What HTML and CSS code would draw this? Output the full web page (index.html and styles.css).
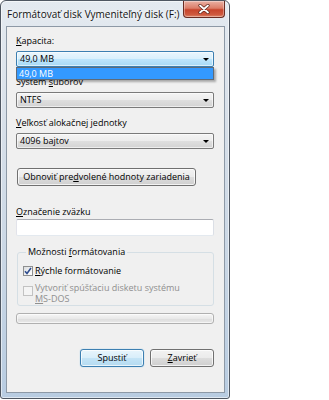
FILE: index.html
```html
<!DOCTYPE html>
<html lang="sk">
<head>
<meta charset="utf-8">
<title>Formátovať disk</title>
<link rel="stylesheet" href="styles.css">
</head>
<body>
<div class="window">
  <div class="titlebar">
    <span class="title">Formátovať disk Vymeniteľný disk (F:)</span>
    <div class="close">
      <svg width="12" height="10" viewBox="0 0 12 10">
        <path d="M2 1.5 L10 8.5 M10 1.5 L2 8.5" stroke="#5a2218" stroke-width="3.2" stroke-linecap="round" fill="none"/>
        <path d="M2 1.5 L10 8.5 M10 1.5 L2 8.5" stroke="#ffffff" stroke-width="1.8" stroke-linecap="round" fill="none"/>
      </svg>
    </div>
  </div>
  <div class="client">
    <div class="label"><u>K</u>apacita:</div>
    <div class="combo combo-open">
      <span class="combo-text">49,0 MB</span><span class="arrow"></span>
      <div class="dropdown"><div class="item">49,0 MB</div></div>
    </div>
    <div class="label label-next">Systém <u>s</u>úborov</div>
    <div class="combo">
      <span class="combo-text">NTFS</span><span class="arrow"></span>
    </div>
    <div class="label label-next"><u>V</u>eľkosť alokačnej jednotky</div>
    <div class="combo">
      <span class="combo-text">4096 bajtov</span><span class="arrow"></span>
    </div>
    <button class="btn btn-reset">Obnoviť pre<u>d</u>volené hodnoty zariadenia</button>
    <div class="label label-volume"><u>O</u>značenie zväzku</div>
    <div class="textbox"></div>
    <fieldset class="group">
      <legend>Možnosti <u>f</u>ormátovania</legend>
      <div class="check-row">
        <span class="checkbox">
          <svg width="8" height="8" viewBox="0 0 8 8">
            <path d="M1 4.2 L3 6.5 L7 1" stroke="#2f4d8f" stroke-width="1.6" fill="none"/>
          </svg>
        </span>
        <span class="check-text"><u>R</u>ýchle formátovanie</span>
      </div>
      <div class="check-row disabled">
        <span class="checkbox checkbox-disabled"></span>
        <span class="check-text">Vytvoriť spúšťaciu disketu systému<br><u>M</u>S-DOS</span>
      </div>
    </fieldset>
    <div class="progress"></div>
    <div class="actions">
      <button class="btn btn-default">Spustiť</button>
      <button class="btn"><u>Z</u>avrieť</button>
    </div>
  </div>
</div>
</body>
</html>
```

FILE: styles.css
```css
* {
  box-sizing: border-box;
}

html, body {
  margin: 0;
  padding: 0;
  background: #ffffff;
}

body {
  font-family: "Open Sans", "Noto Sans", sans-serif;
  font-size: 9px;
  color: #000;
}

.window {
  width: 230px;
  height: 399px;
  border: 1px solid #4f5762;
  border-radius: 6px 6px 3px 3px;
  background: linear-gradient(180deg, #e4eaf0 0%, #d8e0e9 30%, #cad7e5 65%, #b8cce1 100%);
  box-shadow: inset 0 0 0 1px rgba(255, 255, 255, 0.55);
  display: flex;
  flex-direction: column;
}

.titlebar {
  height: 25px;
  display: flex;
  align-items: flex-start;
  justify-content: space-between;
}

.title {
  padding: 6px 0 0 6px;
  font-size: 10px;
  line-height: 14px;
  white-space: nowrap;
  color: #111;
  text-shadow: 0 0 6px rgba(255, 255, 255, 0.95), 0 0 3px rgba(255, 255, 255, 0.9);
}

.close {
  width: 42px;
  height: 17px;
  margin-right: 4px;
  border: 1px solid #6a2c22;
  border-top: none;
  border-radius: 0 0 4px 4px;
  background: linear-gradient(180deg, #eab1a4 0%, #dc7d68 45%, #c7442c 55%, #cf5a3f 85%, #e0886c 100%);
  box-shadow: inset 0 0 0 1px rgba(255, 255, 255, 0.35);
  display: flex;
  align-items: center;
  justify-content: center;
}

.client {
  flex: 1;
  margin: 0 4px 5px 5px;
  border: 1px solid #8d99a6;
  background: #f0f0f0;
  padding: 8px 10px 0 9px;
  display: flex;
  flex-direction: column;
}

.label {
  height: 12px;
  line-height: 12px;
  white-space: nowrap;
}

.label-next {
  margin-top: 9px;
}

.label-volume {
  margin-top: 20px;
}

.combo {
  position: relative;
  margin-top: 4px;
  height: 16px;
  border: 1px solid #7a7a7a;
  border-radius: 2px;
  background: linear-gradient(180deg, #f4f4f4 0%, #ececec 50%, #dfdfdf 50%, #d3d3d3 100%);
  box-shadow: inset 0 0 0 1px rgba(255, 255, 255, 0.6);
  display: flex;
  align-items: center;
  padding: 0 4px 0 3px;
}

.combo-open {
  border-color: #3c7fb1;
  background: linear-gradient(180deg, #eaf6fd 0%, #d9f0fc 50%, #bee6fd 50%, #a7d9f5 100%);
}

.combo-text {
  line-height: 12px;
  white-space: nowrap;
}

.arrow {
  margin-left: auto;
  width: 0;
  height: 0;
  border-left: 3px solid transparent;
  border-right: 3px solid transparent;
  border-top: 3px solid #000;
}

.dropdown {
  position: absolute;
  top: calc(100% + 1px);
  left: -1px;
  right: -1px;
  height: 13px;
  border: 1px solid #5f6b78;
  background: #ffffff;
  box-shadow: 2px 2px 2px rgba(0, 0, 0, 0.3);
  z-index: 2;
}

.item {
  height: 100%;
  background: #3399ff;
  color: #ffffff;
  line-height: 11px;
  padding-left: 2px;
}

.btn {
  font-family: inherit;
  font-size: 9px;
  color: #000;
  height: 18px;
  padding: 0 4px;
  border: 1px solid #707070;
  border-radius: 3px;
  background: linear-gradient(180deg, #f2f2f2 0%, #ebebeb 50%, #dddddd 50%, #cfcfcf 100%);
  box-shadow: inset 0 0 0 1px rgba(255, 255, 255, 0.75);
  line-height: 14px;
  white-space: nowrap;
}

.btn-reset {
  margin: 19px 0 0 1px;
  width: 179px;
  align-self: flex-start;
}

.btn-default {
  border-color: #3c7fb1;
  background: linear-gradient(180deg, #e8f5fc 0%, #d8eefa 50%, #c4e4f6 50%, #b4dbf1 100%);
  box-shadow: inset 0 0 0 1px rgba(255, 255, 255, 0.7), 0 0 1px #5fb4e8;
}

.textbox {
  margin-top: 1px;
  height: 17px;
  border: 1px solid;
  border-color: #abadb3 #dbdfe6 #e3e9ef #e2e3ea;
  border-radius: 2px;
  background: #ffffff;
}

.group {
  margin: 10px 0 0 1px;
  padding: 7px 6px 1px 5px;
  border: 1px solid #d5dfe5;
  border-radius: 3px;
  min-width: 0;
}

.group legend {
  padding: 0 2px;
  margin-left: 3px;
  line-height: 12px;
  height: 12px;
}

.check-row {
  display: flex;
  align-items: flex-start;
}

.check-row + .check-row {
  margin-top: 5px;
}

.checkbox {
  flex: none;
  width: 10px;
  height: 10px;
  margin-top: 1px;
  margin-right: 2px;
  border: 1px solid #8e8f8f;
  background: linear-gradient(135deg, #d9dcdf 0%, #f4f4f4 60%, #ffffff 100%);
  display: flex;
  align-items: center;
  justify-content: center;
}

.checkbox-disabled {
  margin-top: 4px;
  border-color: #c2c2c2;
  background: #f4f4f4;
}

.check-text {
  line-height: 12px;
  white-space: nowrap;
}

.disabled .check-text {
  color: #8f8f8f;
  line-height: 11px;
}

.progress {
  margin-top: 7px;
  height: 11px;
  border: 1px solid #b0b0b0;
  border-radius: 3px;
  background: linear-gradient(180deg, #f6f6f6 0%, #e9e9e9 50%, #dedede 55%, #e8e8e8 100%);
  box-shadow: inset 0 0 0 1px rgba(255, 255, 255, 0.6);
}

.actions {
  margin-top: 25px;
  display: flex;
  justify-content: flex-end;
  gap: 6px;
}

.actions .btn {
  width: 64px;
}
```
